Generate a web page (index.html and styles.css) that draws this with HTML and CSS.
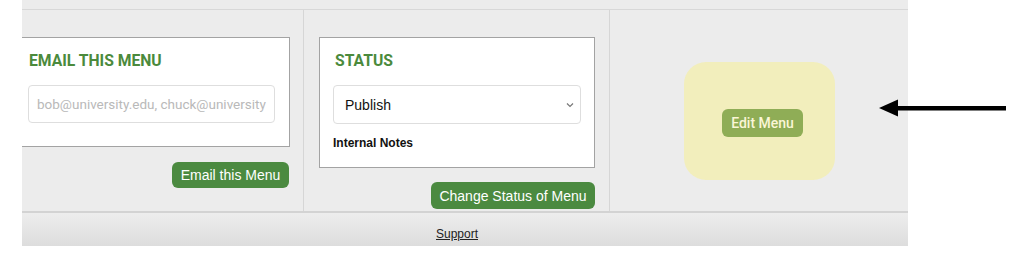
FILE: index.html
```html
<!DOCTYPE html>
<html lang="en">
  <head>
    <meta charset="UTF-8" />
    <meta name="viewport" content="width=device-width, initial-scale=1.0" />
    <title>Menu</title>
    <link rel="stylesheet" href="styles.css">
  </head>
  <body>
    <div class="page">
      <div class="panel">
        <div class="columns">
          <div class="col col_email">
            <div class="card card_email">
              <h2 class="card_title">EMAIL THIS MENU</h2>
              <div class="field placeholder">bob@university.edu, chuck@university</div>
            </div>
            <div class="actions">
              <button class="btn">Email this Menu</button>
            </div>
          </div>
          <div class="col col_status">
            <div class="card card_status">
              <h2 class="card_title">STATUS</h2>
              <div class="field select">
                <span>Publish</span>
                <svg width="8" height="6" viewBox="0 0 8 6"><path d="M1 1.5 L4 4.5 L7 1.5" fill="none" stroke="#777" stroke-width="1.2"/></svg>
              </div>
              <div class="notes_label">Internal Notes</div>
            </div>
            <div class="actions">
              <button class="btn btn_wide">Change Status of Menu</button>
            </div>
          </div>
          <div class="col col_edit">
            <div class="highlight">
              <button class="btn_edit">Edit Menu</button>
            </div>
          </div>
        </div>
        <div class="footer">
          <a href="#">Support</a>
        </div>
      </div>
      <svg class="arrow" width="130" height="20" viewBox="0 0 130 20">
        <path d="M0 9 L19 0.5 L19 17.5 Z" fill="#000"/>
        <rect x="17" y="7" width="110" height="4.5" fill="#000"/>
      </svg>
    </div>
  </body>
</html>
```

FILE: styles.css
```css
* {
  padding: 0;
  margin: 0;
  box-sizing: border-box;
}
body {
  background: #fff;
  font-family: "Liberation Sans", Arial, sans-serif;
}
.page {
  position: relative;
  padding-left: 22px;
  width: 908px;
}
.panel {
  background: #ececec;
  padding-top: 9px;
}
.columns {
  display: grid;
  grid-template-columns: 282px 306px 298px;
  height: 204px;
  border-top: 1px solid #d8d8d8;
  border-bottom: 2px solid #d3d3d3;
}
.col {
  border-right: 1px solid #d6d6d6;
  padding-top: 27px;
  overflow: hidden;
}
.col_edit {
  border-right: none;
  display: flex;
  justify-content: center;
  padding-top: 52px;
}
.card {
  background: #fff;
  border: 1px solid #a3a3a3;
}
.card_email {
  margin-left: -10px;
  margin-right: 13px;
  height: 110px;
  padding: 14px 14px 0 15px;
}
.card_status {
  margin-left: 15px;
  margin-right: 14px;
  height: 131px;
  padding: 14px 13px 0 13px;
}
.card_title {
  font-family: Roboto, "Liberation Sans", sans-serif;
  font-size: 15.7px;
  line-height: 18px;
  font-weight: 700;
  color: #4b8a3c;
  height: 18px;
  margin-bottom: 15px;
  padding-left: 1px;
}
.card_status .card_title {
  padding-left: 2px;
}
.field {
  height: 38px;
  border: 1px solid #dedede;
  border-radius: 4px;
  background: #fff;
  display: flex;
  align-items: center;
}
.placeholder {
  font-family: Roboto, "Liberation Sans", sans-serif;
  font-size: 13.5px;
  color: #b9b9b9;
  padding-left: 8px;
  white-space: nowrap;
  overflow: hidden;
}
.select {
  height: 39px;
  justify-content: space-between;
  padding: 0 6px 0 11px;
  font-size: 14px;
  color: #111;
}
.notes_label {
  font-size: 12px;
  font-weight: 700;
  color: #111;
  margin-top: 12px;
}
.actions {
  display: flex;
  justify-content: flex-end;
  margin-top: 15px;
  margin-right: 14px;
}
.col_status .actions {
  margin-top: 14px;
}
.btn {
  font-family: "Liberation Sans", Arial, sans-serif;
  font-size: 14px;
  color: #fff;
  background: #4b8a40;
  border: none;
  border-radius: 6px;
  height: 26px;
  width: 117px;
}
.btn_wide {
  width: 164px;
  height: 27px;
}
.highlight {
  width: 151px;
  height: 118px;
  background: #f2eebc;
  border-radius: 22px;
  display: flex;
  justify-content: center;
  padding-top: 47px;
  padding-left: 7px;
}
.btn_edit {
  font-family: Roboto, "Liberation Sans", sans-serif;
  font-size: 14px;
  font-weight: 500;
  color: #fbf6d6;
  background: #8fad56;
  border: none;
  border-radius: 6px;
  width: 81px;
  height: 28px;
}
.footer {
  height: 33px;
  background: linear-gradient(#ededed, #dddddd);
  display: flex;
  align-items: center;
  justify-content: center;
  padding: 8px 16px 0 0;
}
.footer a {
  font-size: 12px;
  color: #222;
  text-decoration: underline;
}
.arrow {
  position: absolute;
  left: 879px;
  top: 99px;
}
```
